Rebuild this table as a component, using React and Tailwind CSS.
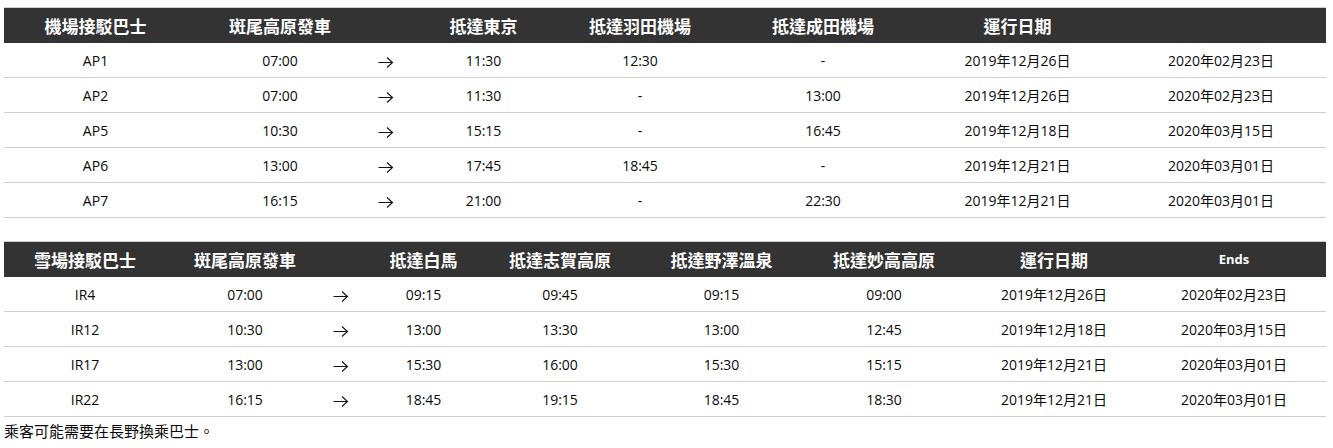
const airport = {
  cols: 'grid-cols-[183px_186px_26px_169px_144px_222px_167px_225px]',
  head: ['機場接駁巴士', '斑尾高原發車', '', '抵達東京', '抵達羽田機場', '抵達成田機場', '運行日期', ''],
  rows: [
    ['AP1', '07:00', '→', '11:30', '12:30', '-', '2019年12月26日', '2020年02月23日'],
    ['AP2', '07:00', '→', '11:30', '-', '13:00', '2019年12月26日', '2020年02月23日'],
    ['AP5', '10:30', '→', '15:15', '-', '16:45', '2019年12月18日', '2020年03月15日'],
    ['AP6', '13:00', '→', '17:45', '18:45', '-', '2019年12月21日', '2020年03月01日'],
    ['AP7', '16:15', '→', '21:00', '-', '22:30', '2019年12月21日', '2020年03月01日'],
  ],
  last: 'pl-[15px]',
};

const resort = {
  cols: 'grid-cols-[162px_158px_33px_133px_140px_183px_142px_198px_173px]',
  head: ['雪場接駁巴士', '斑尾高原發車', '', '抵達白馬', '抵達志賀高原', '抵達野澤溫泉', '抵達妙高高原', '運行日期', 'Ends'],
  rows: [
    ['IR4', '07:00', '→', '09:15', '09:45', '09:15', '09:00', '2019年12月26日', '2020年02月23日'],
    ['IR12', '10:30', '→', '13:00', '13:30', '13:00', '12:45', '2019年12月18日', '2020年03月15日'],
    ['IR17', '13:00', '→', '15:30', '16:00', '15:30', '15:15', '2019年12月21日', '2020年03月01日'],
    ['IR22', '16:15', '→', '18:45', '19:15', '18:45', '18:30', '2019年12月21日', '2020年03月01日'],
  ],
  last: 'pr-[11px]',
};

function Arrow() {
  return (
    <svg width="16" height="12" viewBox="0 0 16 12" className="mt-[3px]">
      <path d="M0.5 6.5h14.5M9 1.5l5.5 5-5.5 5" fill="none" stroke="#111" strokeWidth="1.1" />
    </svg>
  );
}

function Table({ data }) {
  const n = data.head.length;
  return (
    <div className="border-t border-[#cfcfcf]">
      <div className={`grid ${data.cols} h-[35px] bg-[#333333] text-white`}>
        {data.head.map((h, i) => (
          <div
            key={i}
            className={`flex items-center justify-center font-bold ${i === n - 1 ? data.last : ''} ${
              h === 'Ends'
                ? "text-[13px] font-['Open_Sans',sans-serif]"
                : "text-[17px] font-['Noto_Sans_CJK_TC',sans-serif]"
            }`}
          >
            {h}
          </div>
        ))}
      </div>
      {data.rows.map((r, ri) => (
        <div key={ri} className={`grid ${data.cols} h-[35px] border-b border-[#cfcfcf]`}>
          {r.map((c, i) => (
            <div key={i} className={`flex items-center justify-center pt-[1px] ${i === n - 1 ? data.last : ''}`}>
              {c === '→' ? <Arrow /> : c}
            </div>
          ))}
        </div>
      ))}
    </div>
  );
}

export default function App() {
  return (
    <div className="bg-white w-[1333px] h-[448px] pt-[7px] px-[4px] text-[14px] text-[#0a0a0a] font-['Open_Sans','Noto_Sans_CJK_TC',sans-serif]">
      <div className="w-[1322px]">
        <Table data={airport} />
        <div className="h-[23px]" />
        <Table data={resort} />
        <p className="text-[15px] leading-[28px] font-['Noto_Sans_CJK_TC',sans-serif]">乘客可能需要在長野換乘巴士。</p>
      </div>
    </div>
  );
}
